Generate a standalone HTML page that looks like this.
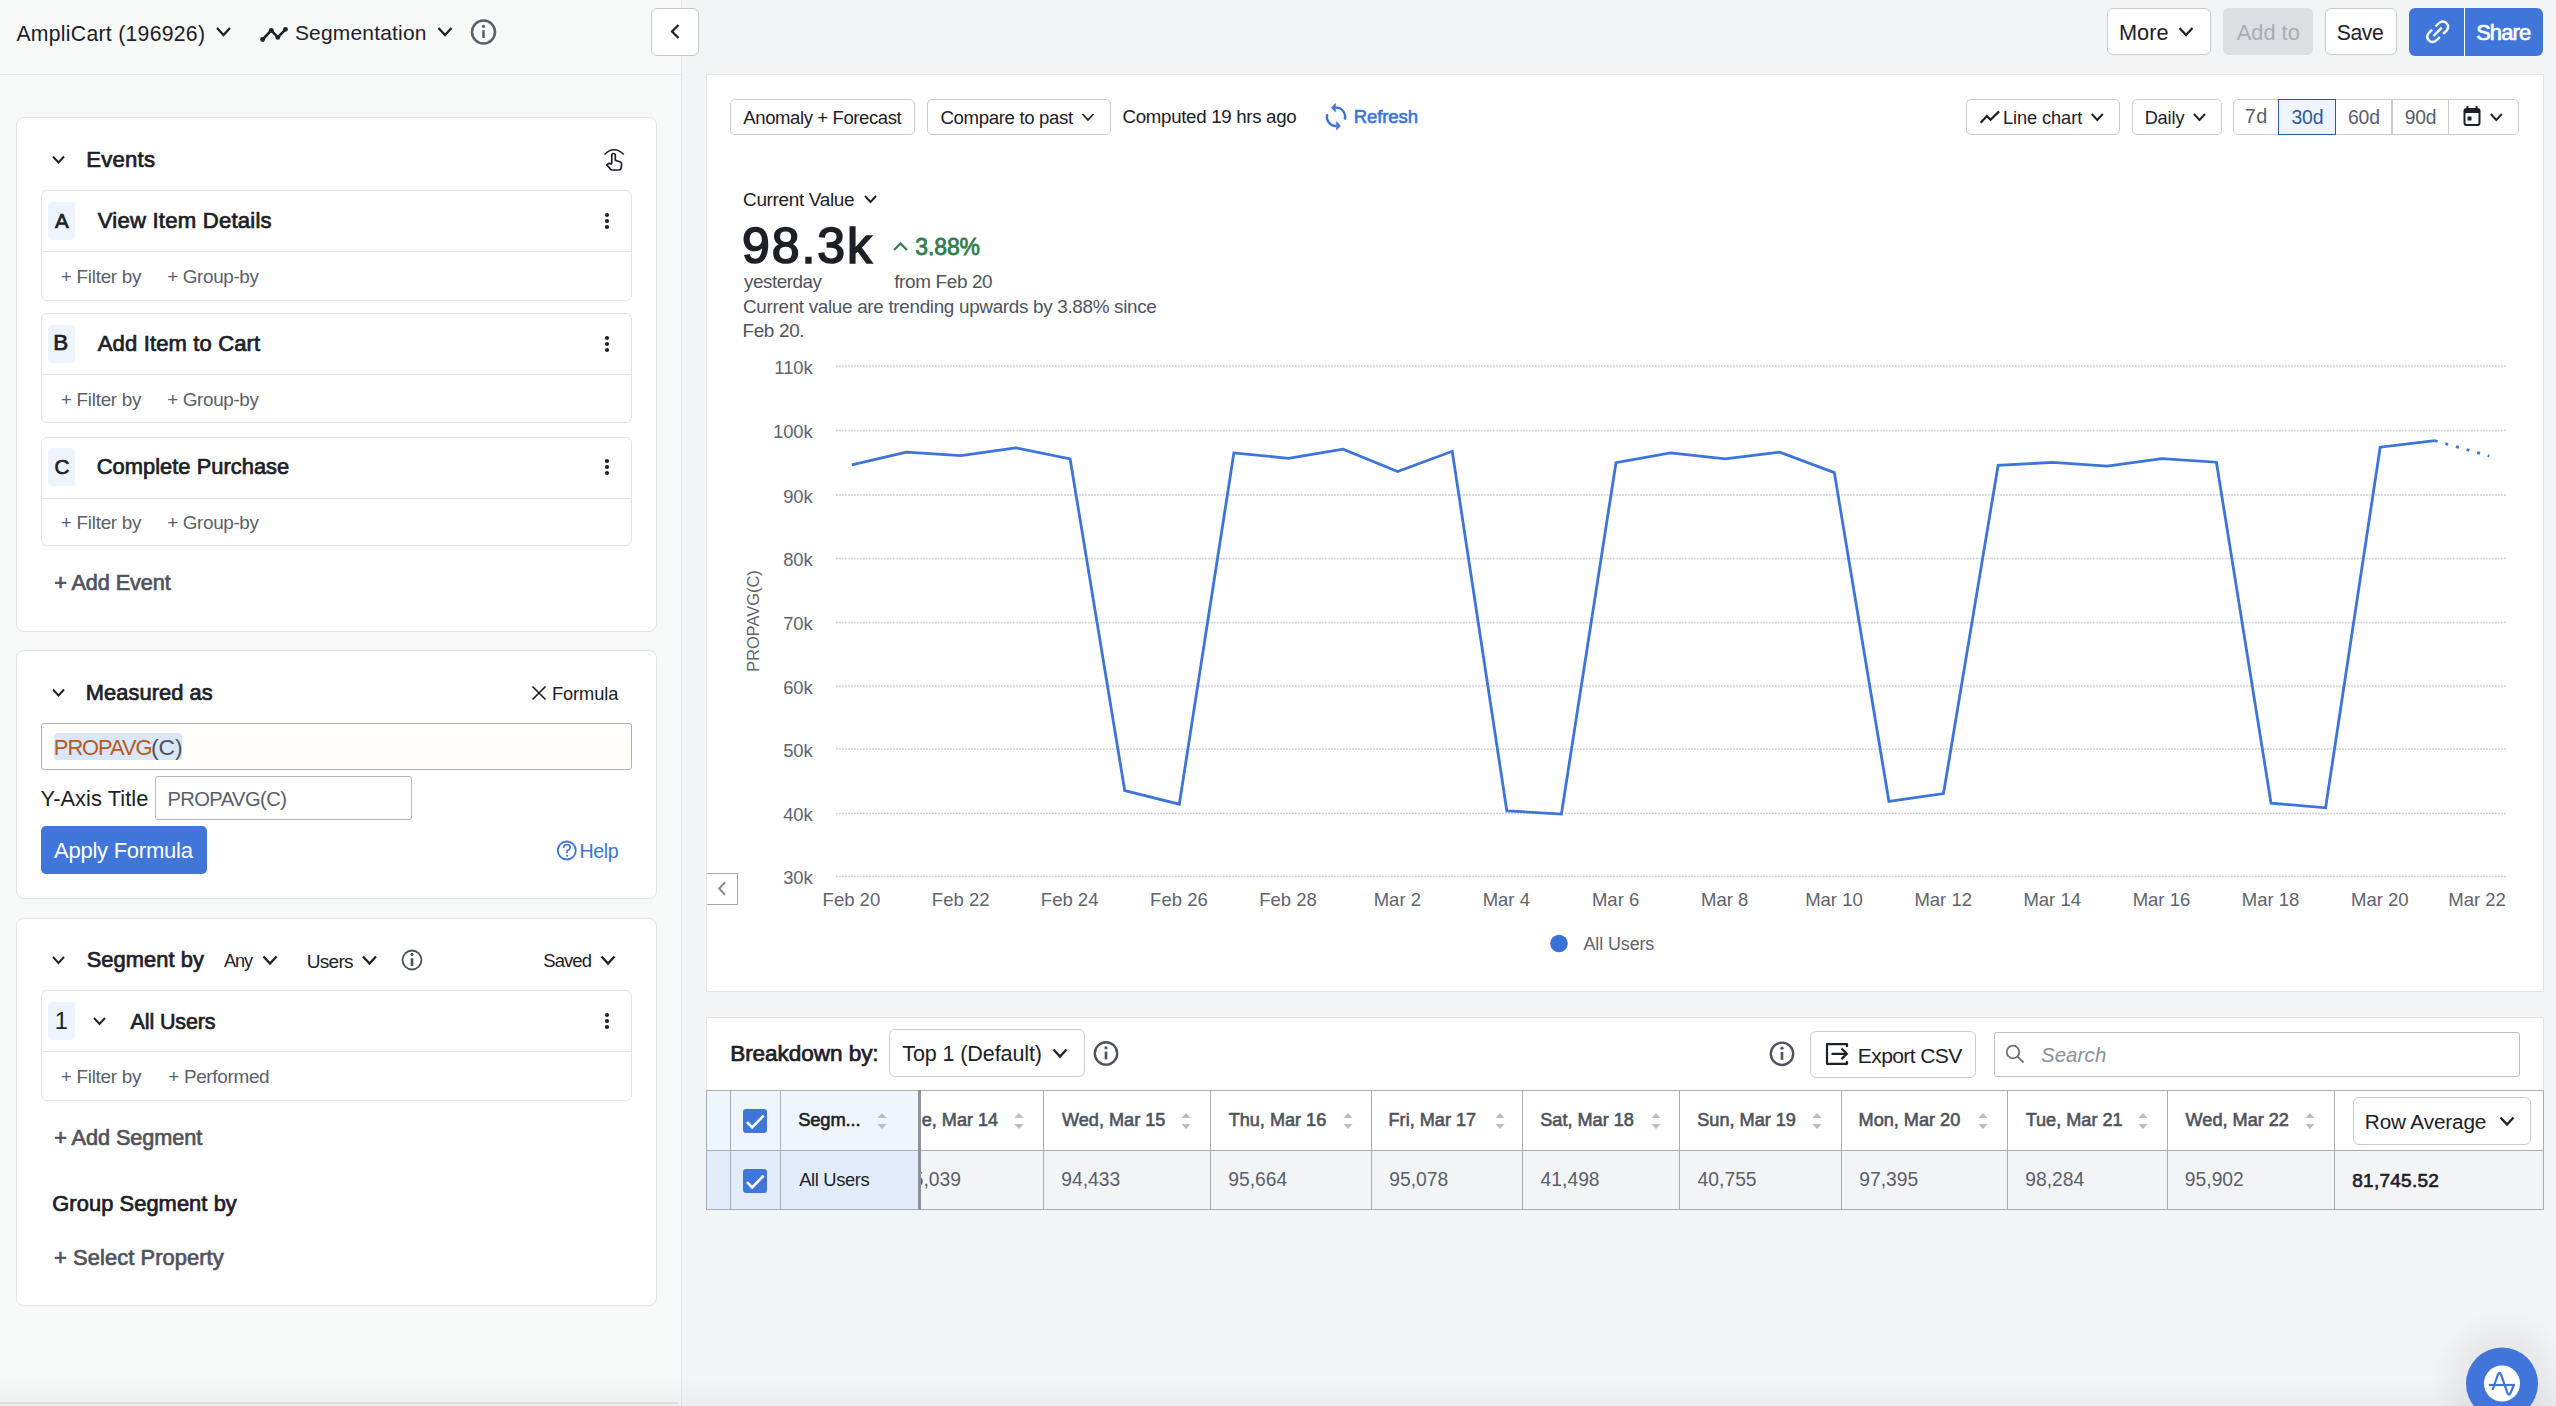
<!DOCTYPE html>
<html><head><meta charset="utf-8"><title>Segmentation</title>
<style>
html,body{margin:0;padding:0;}
body{width:2556px;height:1406px;overflow:hidden;position:relative;background:#f3f4f6;font-family:"Liberation Sans",sans-serif;}
.t{position:absolute;white-space:pre;font-family:"Liberation Sans",sans-serif;}
</style></head><body>
<div style="position:absolute;left:0px;top:0px;width:681px;height:1406px;background:#f7f8f8"></div>
<div style="position:absolute;left:681px;top:0px;width:1px;height:1406px;background:#e3e5e9"></div>
<div style="position:absolute;left:0px;top:74px;width:681px;height:1px;background:#e3e5e9"></div>
<div style="position:absolute;left:651px;top:8px;width:48px;height:48px;background:#fff;border:1.2px solid #c6c9ce;border-radius:6px;box-sizing:border-box"></div>
<div style="position:absolute;left:16px;top:117px;width:641px;height:515px;background:#fff;border:1px solid #e1e3e7;border-radius:8px;box-sizing:border-box"></div>
<div style="position:absolute;left:41px;top:190px;width:591px;height:111px;background:#fff;border:1px solid #e1e3e7;border-radius:6px;box-sizing:border-box"></div>
<div style="position:absolute;left:42px;top:251px;width:589px;height:1px;background:#e1e3e7"></div>
<div style="position:absolute;left:48px;top:202px;width:27px;height:38px;background:#eef4fd;border-radius:4px"></div>
<div style="position:absolute;left:41px;top:313px;width:591px;height:110px;background:#fff;border:1px solid #e1e3e7;border-radius:6px;box-sizing:border-box"></div>
<div style="position:absolute;left:42px;top:374px;width:589px;height:1px;background:#e1e3e7"></div>
<div style="position:absolute;left:48px;top:325px;width:27px;height:38px;background:#eef4fd;border-radius:4px"></div>
<div style="position:absolute;left:41px;top:437px;width:591px;height:109px;background:#fff;border:1px solid #e1e3e7;border-radius:6px;box-sizing:border-box"></div>
<div style="position:absolute;left:42px;top:498px;width:589px;height:1px;background:#e1e3e7"></div>
<div style="position:absolute;left:48px;top:448px;width:27px;height:38px;background:#eef4fd;border-radius:4px"></div>
<div style="position:absolute;left:16px;top:650px;width:641px;height:249px;background:#fff;border:1px solid #e1e3e7;border-radius:8px;box-sizing:border-box"></div>
<div style="position:absolute;left:41px;top:723px;width:591px;height:47px;background:#fffefb;border:1.5px solid #aeb0b8;border-radius:3px;box-sizing:border-box"></div>
<div style="position:absolute;left:54px;top:733px;width:128px;height:27px;background:#d9e7f9;border-radius:4px"></div>
<div style="position:absolute;left:155px;top:776px;width:257px;height:44px;background:#fff;border:1.5px solid #b4b6bd;border-radius:3px;box-sizing:border-box"></div>
<div style="position:absolute;left:41px;top:826px;width:166px;height:48px;background:#4176d9;border-radius:5px"></div>
<div style="position:absolute;left:16px;top:918px;width:641px;height:388px;background:#fff;border:1px solid #e1e3e7;border-radius:8px;box-sizing:border-box"></div>
<div style="position:absolute;left:41px;top:990px;width:591px;height:111px;background:#fff;border:1px solid #e1e3e7;border-radius:6px;box-sizing:border-box"></div>
<div style="position:absolute;left:42px;top:1051px;width:589px;height:1px;background:#e1e3e7"></div>
<div style="position:absolute;left:48px;top:1002px;width:27px;height:38px;background:#eef4fd;border-radius:4px"></div>
<div style="position:absolute;left:2107px;top:8px;width:104px;height:47px;background:#fff;border:1px solid #caccd1;border-radius:6px;box-sizing:border-box"></div>
<div style="position:absolute;left:2223px;top:8px;width:90px;height:47px;background:#dcdee2;border-radius:6px"></div>
<div style="position:absolute;left:2325px;top:8px;width:72px;height:47px;background:#fff;border:1px solid #caccd1;border-radius:6px;box-sizing:border-box"></div>
<div style="position:absolute;left:2409px;top:8px;width:134px;height:48px;background:#4176d9;border-radius:6px"></div>
<div style="position:absolute;left:2464px;top:8px;width:1px;height:48px;background:#fff"></div>
<div style="position:absolute;left:706px;top:74px;width:1838px;height:918px;background:#fff;border:1px solid #e1e3e7;box-sizing:border-box"></div>
<div style="position:absolute;left:730px;top:99px;width:184.5px;height:35.5px;background:#fff;border:1.5px solid #c9cbd0;border-radius:5px;box-sizing:border-box"></div>
<div style="position:absolute;left:927px;top:99px;width:183.5px;height:35.5px;background:#fff;border:1.5px solid #c9cbd0;border-radius:5px;box-sizing:border-box"></div>
<div style="position:absolute;left:1966px;top:99px;width:153.5px;height:35.5px;background:#fff;border:1.5px solid #c9cbd0;border-radius:5px;box-sizing:border-box"></div>
<div style="position:absolute;left:2132px;top:99px;width:89.5px;height:35.5px;background:#fff;border:1.5px solid #c9cbd0;border-radius:5px;box-sizing:border-box"></div>
<div style="position:absolute;left:2233px;top:99px;width:286px;height:35.5px;background:#fff;border:1.5px solid #c9cbd0;border-radius:5px;box-sizing:border-box"></div>
<div style="position:absolute;left:2334.95px;top:99.5px;width:1.5px;height:34.5px;background:#c9cbd0"></div>
<div style="position:absolute;left:2391.25px;top:99.5px;width:1.5px;height:34.5px;background:#c9cbd0"></div>
<div style="position:absolute;left:2447.55px;top:99.5px;width:1.5px;height:34.5px;background:#c9cbd0"></div>
<div style="position:absolute;left:2278px;top:99px;width:58px;height:35.5px;background:#eef5fe;border:1.5px solid #2f57a8;box-sizing:border-box"></div>
<div style="position:absolute;left:706.5px;top:873px;width:31.5px;height:31.5px;background:#fff;border:1px solid #a4a7b0;border-left:none;box-sizing:border-box"></div>
<div style="position:absolute;left:706px;top:1017px;width:1838px;height:193px;background:#fff;border:1px solid #e1e3e7;box-sizing:border-box"></div>
<div style="position:absolute;left:889px;top:1029px;width:196px;height:48px;background:#fff;border:1px solid #c9cbd0;border-radius:6px;box-sizing:border-box"></div>
<div style="position:absolute;left:1809.5px;top:1030.5px;width:166.5px;height:47px;background:#fff;border:1px solid #c9cbd0;border-radius:6px;box-sizing:border-box"></div>
<div style="position:absolute;left:1994px;top:1031.5px;width:525.5px;height:45px;background:#fff;border:1px solid #b9bdc4;border-radius:3px;box-sizing:border-box"></div>
<div style="position:absolute;left:706px;top:1090px;width:1838px;height:60px;background:#fff"></div>
<div style="position:absolute;left:706px;top:1150px;width:1838px;height:60px;background:#f3f4f6"></div>
<div style="position:absolute;left:706px;top:1090px;width:213px;height:60px;background:#eef5fd"></div>
<div style="position:absolute;left:706px;top:1150px;width:213px;height:60px;background:#e2ebf9"></div>
<div style="position:absolute;left:706px;top:1090px;width:1838px;height:1px;background:#a8acb3"></div>
<div style="position:absolute;left:706px;top:1150px;width:1838px;height:1px;background:#a8acb3"></div>
<div style="position:absolute;left:706px;top:1209px;width:1838px;height:1px;background:#a8acb3"></div>
<div style="position:absolute;left:706px;top:1090px;width:1px;height:120px;background:#a8acb3"></div>
<div style="position:absolute;left:2542.5px;top:1090px;width:1px;height:120px;background:#a8acb3"></div>
<div style="position:absolute;left:729.9px;top:1090px;width:1px;height:120px;background:#a8acb3"></div>
<div style="position:absolute;left:779.9px;top:1090px;width:1px;height:120px;background:#a8acb3"></div>
<div style="position:absolute;left:1042.7px;top:1090px;width:1px;height:120px;background:#a8acb3"></div>
<div style="position:absolute;left:1209.8px;top:1090px;width:1px;height:120px;background:#a8acb3"></div>
<div style="position:absolute;left:1370.5px;top:1090px;width:1px;height:120px;background:#a8acb3"></div>
<div style="position:absolute;left:1521.6px;top:1090px;width:1px;height:120px;background:#a8acb3"></div>
<div style="position:absolute;left:1679.0px;top:1090px;width:1px;height:120px;background:#a8acb3"></div>
<div style="position:absolute;left:1840.9px;top:1090px;width:1px;height:120px;background:#a8acb3"></div>
<div style="position:absolute;left:2006.9px;top:1090px;width:1px;height:120px;background:#a8acb3"></div>
<div style="position:absolute;left:2167.0px;top:1090px;width:1px;height:120px;background:#a8acb3"></div>
<div style="position:absolute;left:2333.9px;top:1090px;width:1px;height:120px;background:#a8acb3"></div>
<div style="position:absolute;left:918px;top:1090px;width:3px;height:120px;background:#8e929a"></div>
<div style="position:absolute;left:2353px;top:1097px;width:178px;height:48px;background:#fff;border:1px solid #c9cbd0;border-radius:6px;box-sizing:border-box"></div>
<div style="position:absolute;left:743px;top:1109px;width:24px;height:24px;background:#4176d9;border-radius:3px"></div>
<div style="position:absolute;left:743px;top:1169px;width:24px;height:24px;background:#4176d9;border-radius:3px"></div>
<div style="position:absolute;left:0px;top:1378px;width:2556px;height:28px;background:linear-gradient(to bottom,rgba(0,0,0,0),rgba(0,0,0,0.03))"></div>
<div style="position:absolute;left:0px;top:1402px;width:679px;height:1.5px;background:#dcdee2"></div>
<div style="position:absolute;left:2430px;top:1310px;width:144px;height:144px;border-radius:50%;background:radial-gradient(circle,rgba(0,0,0,0.10) 0%,rgba(0,0,0,0.05) 35%,rgba(0,0,0,0) 70%)"></div>
<svg width="2556" height="1406" style="position:absolute;left:0;top:0">
<polyline points="217.0,28.0 223.5,35.0 230.0,28.0" fill="none" stroke="#1d2026" stroke-width="2.3"/>
<polyline points="262.6,39.5 271.3,30.3 277.8,37.4 285.5,29.3" fill="none" stroke="#1d2026" stroke-width="2.6" stroke-linejoin="round"/>
<circle cx="262.6" cy="39.5" r="2.4" fill="#1d2026"/>
<circle cx="271.3" cy="30.3" r="2.4" fill="#1d2026"/>
<circle cx="277.8" cy="37.4" r="2.4" fill="#1d2026"/>
<circle cx="285.5" cy="29.3" r="2.4" fill="#1d2026"/>
<polyline points="438.5,28.0 445,35.0 451.5,28.0" fill="none" stroke="#1d2026" stroke-width="2.3"/>
<circle cx="483.5" cy="32" r="11.5" fill="none" stroke="#5a5f69" stroke-width="2.5"/>
<line x1="483.5" y1="30.2" x2="483.5" y2="38" stroke="#5a5f69" stroke-width="2.6"/>
<circle cx="483.5" cy="26.4" r="1.6" fill="#5a5f69"/>
<polyline points="678.5,25 672,31.5 678.5,38" fill="none" stroke="#1d2026" stroke-width="2.2"/>
<polyline points="53.0,156.5 58.5,162.5 64.0,156.5" fill="none" stroke="#1d2026" stroke-width="1.9"/>
<polyline points="53.0,689.5 58.5,695.5 64.0,689.5" fill="none" stroke="#1d2026" stroke-width="1.9"/>
<polyline points="53.0,957.0 58.5,963.0 64.0,957.0" fill="none" stroke="#1d2026" stroke-width="1.9"/>
<polyline points="94.0,1018.0 99.5,1024.0 105.0,1018.0" fill="none" stroke="#1d2026" stroke-width="1.9"/>
<path d="M604.5,154.5 Q614,145 623.8,154.5" fill="none" stroke="#1d2026" stroke-width="1.6"/>
<path d="M611.8,163.5 L611.8,154.5 Q613.5,152.5 615.3,154.5 L615.3,160.2 L620.5,162 Q622,163 621.6,165 L621,168.6 Q620.6,170 619,170 L612.3,170 Q611.5,170 610.8,169.3 L606.8,165 L608.5,163.6 Q610,163 611.8,164.5" fill="none" stroke="#1d2026" stroke-width="1.7" stroke-linejoin="round"/>
<circle cx="607" cy="215" r="2.1" fill="#1d2026"/>
<circle cx="607" cy="221" r="2.1" fill="#1d2026"/>
<circle cx="607" cy="227" r="2.1" fill="#1d2026"/>
<circle cx="607" cy="338" r="2.1" fill="#1d2026"/>
<circle cx="607" cy="344" r="2.1" fill="#1d2026"/>
<circle cx="607" cy="350" r="2.1" fill="#1d2026"/>
<circle cx="607" cy="461" r="2.1" fill="#1d2026"/>
<circle cx="607" cy="467" r="2.1" fill="#1d2026"/>
<circle cx="607" cy="473" r="2.1" fill="#1d2026"/>
<circle cx="607" cy="1015" r="2.1" fill="#1d2026"/>
<circle cx="607" cy="1021" r="2.1" fill="#1d2026"/>
<circle cx="607" cy="1027" r="2.1" fill="#1d2026"/>
<path d="M532.5,686.5 L545.5,699.5 M545.5,686.5 L532.5,699.5" stroke="#1d2026" stroke-width="1.7"/>
<circle cx="566.8" cy="850.5" r="9" fill="none" stroke="#3b73d9" stroke-width="1.8"/>
<path d="M563.6,848 Q563.8,844.5 567,844.5 Q570.3,844.6 570.2,847.6 Q570,849.6 567.2,850.8 L567.2,853" fill="none" stroke="#3b73d9" stroke-width="1.7"/>
<circle cx="567.2" cy="855.8" r="1.1" fill="#3b73d9"/>
<polyline points="263.5,956.5 270,963.5 276.5,956.5" fill="none" stroke="#1d2026" stroke-width="2.3"/>
<polyline points="363.0,956.5 369.5,963.5 376.0,956.5" fill="none" stroke="#1d2026" stroke-width="2.3"/>
<circle cx="412" cy="960" r="9.5" fill="none" stroke="#4f535c" stroke-width="1.8"/>
<line x1="412" y1="958.2" x2="412" y2="966" stroke="#4f535c" stroke-width="2.6"/>
<circle cx="412" cy="954.4" r="1.6" fill="#4f535c"/>
<polyline points="601.5,956.5 608,963.5 614.5,956.5" fill="none" stroke="#1d2026" stroke-width="2.3"/>
<polyline points="2179.5,28.0 2186,35.0 2192.5,28.0" fill="none" stroke="#1d2026" stroke-width="2.3"/>
<g fill="none" stroke="#fff" stroke-width="2.4" stroke-linecap="butt"><path d="M2435.5,26.5 L2439,23.2 Q2443,19.8 2446.5,23.2 Q2449.8,26.8 2446.5,30.6 L2443.2,33.8"/><path d="M2439.8,37 L2436.3,40.3 Q2432.3,43.8 2428.8,40.3 Q2425.5,36.7 2428.8,33 L2432.2,29.7"/><path d="M2433.5,36 L2441.8,27.6"/></g>
<polyline points="1082.5,114.0 1088,120.0 1093.5,114.0" fill="none" stroke="#1d2026" stroke-width="1.8"/>
<g fill="none" stroke="#3b73d9" stroke-width="2.4"><path d="M1336,107.6 A9,9 0 0 1 1344.6,119.5"/><path d="M1336,126 A9,9 0 0 1 1327.4,114.2"/></g>
<path d="M1331,107.7 L1335.8,103 L1335.8,112.6 Z" fill="#3b73d9"/><path d="M1340.8,126 L1336.2,121 L1336.2,130.6 Z" fill="#3b73d9"/>
<polyline points="1980.6,122.7 1986.9,116.1 1990.6,119.8 1999.1,111.4" fill="none" stroke="#1d2026" stroke-width="2.2"/>
<polyline points="2091.8,114.0 2097.3,120.0 2102.8,114.0" fill="none" stroke="#1d2026" stroke-width="1.9"/>
<polyline points="2194.0,114.0 2199.5,120.0 2205.0,114.0" fill="none" stroke="#1d2026" stroke-width="1.9"/>
<rect x="2464.5" y="109" width="15" height="16" rx="2" fill="none" stroke="#1d2026" stroke-width="2"/>
<rect x="2464.5" y="109" width="15" height="4" fill="#1d2026"/>
<rect x="2467.5" y="116.5" width="4" height="4" fill="#1d2026"/>
<path d="M2467.5,106 v4 M2476.5,106 v4" stroke="#1d2026" stroke-width="2"/>
<polyline points="2490.8,114.0 2496.3,120.0 2501.8,114.0" fill="none" stroke="#1d2026" stroke-width="1.9"/>
<polyline points="894,250 900.5,243.5 907,250" fill="none" stroke="#2e7d4e" stroke-width="2.2"/>
<polyline points="865.0,196.0 870.5,202.0 876.0,196.0" fill="none" stroke="#1d2026" stroke-width="1.9"/>
<line x1="836" y1="366.00" x2="2506" y2="366.00" stroke="#c9cfd7" stroke-width="1.5" stroke-dasharray="1.8 1.2"/>
<line x1="836" y1="430.50" x2="2506" y2="430.50" stroke="#c9cfd7" stroke-width="1.5" stroke-dasharray="1.8 1.2"/>
<line x1="836" y1="495.00" x2="2506" y2="495.00" stroke="#c9cfd7" stroke-width="1.5" stroke-dasharray="1.8 1.2"/>
<line x1="836" y1="558.50" x2="2506" y2="558.50" stroke="#c9cfd7" stroke-width="1.5" stroke-dasharray="1.8 1.2"/>
<line x1="836" y1="622.50" x2="2506" y2="622.50" stroke="#c9cfd7" stroke-width="1.5" stroke-dasharray="1.8 1.2"/>
<line x1="836" y1="686.00" x2="2506" y2="686.00" stroke="#c9cfd7" stroke-width="1.5" stroke-dasharray="1.8 1.2"/>
<line x1="836" y1="749.00" x2="2506" y2="749.00" stroke="#c9cfd7" stroke-width="1.5" stroke-dasharray="1.8 1.2"/>
<line x1="836" y1="813.50" x2="2506" y2="813.50" stroke="#c9cfd7" stroke-width="1.5" stroke-dasharray="1.8 1.2"/>
<line x1="836" y1="876.50" x2="2506" y2="876.50" stroke="#c9cfd7" stroke-width="1.5" stroke-dasharray="1.8 1.2"/>
<polyline points="851.80,464.90 906.38,452.20 960.97,455.70 1015.55,447.80 1070.14,459.00 1124.72,790.50 1179.31,804.20 1233.89,452.90 1288.48,458.30 1343.07,449.10 1397.65,471.50 1452.24,451.30 1506.82,810.80 1561.40,814.10 1615.99,462.70 1670.57,452.90 1725.16,458.80 1779.74,452.20 1834.33,472.60 1888.91,801.50 1943.50,793.60 1998.09,465.40 2052.67,462.30 2107.26,466.20 2161.84,458.60 2216.43,462.20 2271.01,803.10 2325.60,807.80 2380.18,447.20 2434.76,440.70" fill="none" stroke="#3d74da" stroke-width="2.8" stroke-linejoin="miter" stroke-miterlimit="10"/>
<line x1="2434.76" y1="440.7" x2="2489.35" y2="456.0" stroke="#3d74da" stroke-width="2.8" stroke-dasharray="3 8"/>
<text x="0" y="0" transform="translate(758.5,621) rotate(-90)" text-anchor="middle" font-family="Liberation Sans" font-size="16.4" fill="#5f636b">PROPAVG(C)</text>
<polyline points="725,882.3 719.2,888.5 725,894.7" fill="none" stroke="#878b96" stroke-width="2"/>
<circle cx="1559" cy="943.5" r="8.8" fill="#3b72d9"/>
<polyline points="1053.5,1049.5 1060,1056.5 1066.5,1049.5" fill="none" stroke="#1d2026" stroke-width="2.3"/>
<circle cx="1106" cy="1053.4" r="11.2" fill="none" stroke="#4f535c" stroke-width="2.4"/>
<line x1="1106" y1="1051.6000000000001" x2="1106" y2="1059.4" stroke="#4f535c" stroke-width="2.6"/>
<circle cx="1106" cy="1047.8000000000002" r="1.6" fill="#4f535c"/>
<circle cx="1782" cy="1053.8" r="11.2" fill="none" stroke="#4f535c" stroke-width="2.4"/>
<line x1="1782" y1="1052.0" x2="1782" y2="1059.8" stroke="#4f535c" stroke-width="2.6"/>
<circle cx="1782" cy="1048.2" r="1.6" fill="#4f535c"/>
<path d="M1847,1047 L1847,1044.2 L1827,1044.2 L1827,1063.8 L1847,1063.8 L1847,1061" fill="none" stroke="#1d2026" stroke-width="2.2" stroke-linejoin="round"/>
<path d="M1831.5,1053.8 L1846.5,1053.8 M1841.5,1048.5 L1846.8,1053.8 L1841.5,1059.1" fill="none" stroke="#1d2026" stroke-width="2.2"/>
<circle cx="2013" cy="1052" r="6.3" fill="none" stroke="#6b7079" stroke-width="1.8"/><line x1="2017.6" y1="1056.6" x2="2023.5" y2="1062.5" stroke="#6b7079" stroke-width="1.8"/>
<polyline points="747,1122.2 752.2,1127.4 763.6,1115.6" fill="none" stroke="#fff" stroke-width="2.6"/>
<polyline points="747,1182.2 752.2,1187.4 763.6,1175.6" fill="none" stroke="#fff" stroke-width="2.6"/>
<path d="M877.3,1118 L882,1113 L886.7,1118 Z M877.3,1124 L882,1129 L886.7,1124 Z" fill="#b9bdc4"/>
<path d="M1014.3,1118 L1019,1113 L1023.7,1118 Z M1014.3,1124 L1019,1129 L1023.7,1124 Z" fill="#b9bdc4"/>
<path d="M1181.3,1118 L1186,1113 L1190.7,1118 Z M1181.3,1124 L1186,1129 L1190.7,1124 Z" fill="#b9bdc4"/>
<path d="M1343.3,1118 L1348,1113 L1352.7,1118 Z M1343.3,1124 L1348,1129 L1352.7,1124 Z" fill="#b9bdc4"/>
<path d="M1495.3,1118 L1500,1113 L1504.7,1118 Z M1495.3,1124 L1500,1129 L1504.7,1124 Z" fill="#b9bdc4"/>
<path d="M1651.3,1118 L1656,1113 L1660.7,1118 Z M1651.3,1124 L1656,1129 L1660.7,1124 Z" fill="#b9bdc4"/>
<path d="M1812.3,1118 L1817,1113 L1821.7,1118 Z M1812.3,1124 L1817,1129 L1821.7,1124 Z" fill="#b9bdc4"/>
<path d="M1978.3,1118 L1983,1113 L1987.7,1118 Z M1978.3,1124 L1983,1129 L1987.7,1124 Z" fill="#b9bdc4"/>
<path d="M2138.3,1118 L2143,1113 L2147.7,1118 Z M2138.3,1124 L2143,1129 L2147.7,1124 Z" fill="#b9bdc4"/>
<path d="M2305.3,1118 L2310,1113 L2314.7,1118 Z M2305.3,1124 L2310,1129 L2314.7,1124 Z" fill="#b9bdc4"/>
<polyline points="2500.5,1117.5 2507,1124.5 2513.5,1117.5" fill="none" stroke="#1d2026" stroke-width="2.3"/>
<circle cx="2502" cy="1383.5" r="36" fill="#4175d9"/>
<circle cx="2502" cy="1383.5" r="18" fill="#fff"/>
<g fill="none" stroke="#4175d9" stroke-width="2.2"><path d="M2489,1385 L2515,1385"/><path d="M2492.5,1390 L2498,1374.5 Q2499.5,1371 2501,1374.5 L2507.5,1393 Q2509,1396.5 2510.5,1393 L2513.5,1386"/></g>
</svg>
<span class="t" style="left:16.40px;top:22.88px;font-size:21.17px;line-height:21.17px;color:#1d2026;letter-spacing:0.302px">AmpliCart (196926)</span>
<span class="t" style="left:294.96px;top:22.57px;font-size:20.95px;line-height:20.95px;color:#1d2026;letter-spacing:0.204px">Segmentation</span>
<span class="t" style="left:86.23px;top:149.06px;font-size:22.13px;line-height:22.13px;color:#1d2026;-webkit-text-stroke:0.73px #1d2026;letter-spacing:0.233px">Events</span>
<span class="t" style="left:55.00px;top:211.39px;font-size:20.57px;line-height:20.57px;color:#1d2026;-webkit-text-stroke:0.68px #1d2026;letter-spacing:-0.783px">A</span>
<span class="t" style="left:97.80px;top:210.05px;font-size:22.15px;line-height:22.15px;color:#1d2026;-webkit-text-stroke:0.73px #1d2026;letter-spacing:0.197px">View Item Details</span>
<span class="t" style="left:60.84px;top:268.28px;font-size:18.92px;line-height:18.92px;color:#5a5f69;letter-spacing:-0.283px">+ Filter by</span>
<span class="t" style="left:167.24px;top:268.30px;font-size:18.90px;line-height:18.90px;color:#5a5f69;letter-spacing:-0.369px">+ Group-by</span>
<span class="t" style="left:53.20px;top:332.49px;font-size:22.45px;line-height:22.45px;color:#1d2026;-webkit-text-stroke:0.74px #1d2026;letter-spacing:0.375px">B</span>
<span class="t" style="left:97.80px;top:332.86px;font-size:22.02px;line-height:22.02px;color:#1d2026;-webkit-text-stroke:0.73px #1d2026;letter-spacing:0.136px">Add Item to Cart</span>
<span class="t" style="left:60.84px;top:390.78px;font-size:18.92px;line-height:18.92px;color:#5a5f69;letter-spacing:-0.283px">+ Filter by</span>
<span class="t" style="left:167.24px;top:390.80px;font-size:18.90px;line-height:18.90px;color:#5a5f69;letter-spacing:-0.369px">+ Group-by</span>
<span class="t" style="left:54.47px;top:457.33px;font-size:20.64px;line-height:20.64px;color:#1d2026;-webkit-text-stroke:0.68px #1d2026;letter-spacing:-0.707px">C</span>
<span class="t" style="left:96.71px;top:456.32px;font-size:21.83px;line-height:21.83px;color:#1d2026;-webkit-text-stroke:0.72px #1d2026;letter-spacing:0.049px">Complete Purchase</span>
<span class="t" style="left:60.84px;top:513.78px;font-size:18.92px;line-height:18.92px;color:#5a5f69;letter-spacing:-0.283px">+ Filter by</span>
<span class="t" style="left:167.24px;top:513.80px;font-size:18.90px;line-height:18.90px;color:#5a5f69;letter-spacing:-0.369px">+ Group-by</span>
<span class="t" style="left:54.13px;top:572.49px;font-size:21.63px;line-height:21.63px;color:#4f535c;-webkit-text-stroke:0.71px #4f535c;letter-spacing:-0.061px">+ Add Event</span>
<span class="t" style="left:85.85px;top:682.31px;font-size:21.84px;line-height:21.84px;color:#1d2026;-webkit-text-stroke:0.72px #1d2026;letter-spacing:0.056px">Measured as</span>
<span class="t" style="left:551.94px;top:685.15px;font-size:18.25px;line-height:18.25px;color:#1d2026;letter-spacing:-0.092px">Formula</span>
<span class="t" style="left:53.85px;top:737.30px;font-size:21.85px;line-height:21.85px;color:#b45a22;letter-spacing:-1.035px">PROPAVG</span>
<span class="t" style="left:151.12px;top:736.36px;font-size:22.97px;line-height:22.97px;color:#4f535c;letter-spacing:-0.142px">(C)</span>
<span class="t" style="left:40.56px;top:788.00px;font-size:21.85px;line-height:21.85px;color:#1d2026;letter-spacing:0.050px">Y-Axis Title</span>
<span class="t" style="left:167.39px;top:789.42px;font-size:20.17px;line-height:20.17px;color:#5a5f69;letter-spacing:-0.566px">PROPAVG(C)</span>
<span class="t" style="left:54.00px;top:839.87px;font-size:22.01px;line-height:22.01px;color:#ffffff;letter-spacing:-0.246px">Apply Formula</span>
<span class="t" style="left:579.43px;top:841.84px;font-size:19.68px;line-height:19.68px;color:#3b73d9;letter-spacing:-0.395px">Help</span>
<span class="t" style="left:86.73px;top:949.30px;font-size:21.86px;line-height:21.86px;color:#1d2026;-webkit-text-stroke:0.72px #1d2026;letter-spacing:0.070px">Segment by</span>
<span class="t" style="left:224.00px;top:952.41px;font-size:18.18px;line-height:18.18px;color:#1d2026;letter-spacing:-1.160px">Any</span>
<span class="t" style="left:306.66px;top:951.63px;font-size:19.10px;line-height:19.10px;color:#1d2026;letter-spacing:-0.744px">Users</span>
<span class="t" style="left:543.26px;top:952.11px;font-size:18.53px;line-height:18.53px;color:#1d2026;letter-spacing:-0.940px">Saved</span>
<span class="t" style="left:54.65px;top:1009.83px;font-size:23.59px;line-height:23.59px;color:#1d2026;letter-spacing:0.321px">1</span>
<span class="t" style="left:130.50px;top:1011.59px;font-size:21.51px;line-height:21.51px;color:#1d2026;-webkit-text-stroke:0.71px #1d2026;letter-spacing:-0.113px">All Users</span>
<span class="t" style="left:60.74px;top:1067.78px;font-size:18.92px;line-height:18.92px;color:#5a5f69;letter-spacing:-0.283px">+ Filter by</span>
<span class="t" style="left:168.24px;top:1067.76px;font-size:18.95px;line-height:18.95px;color:#5a5f69;letter-spacing:-0.336px">+ Performed</span>
<span class="t" style="left:54.13px;top:1126.86px;font-size:21.66px;line-height:21.66px;color:#4f535c;-webkit-text-stroke:0.71px #4f535c;letter-spacing:-0.043px">+ Add Segment</span>
<span class="t" style="left:52.31px;top:1193.10px;font-size:21.86px;line-height:21.86px;color:#1d2026;-webkit-text-stroke:0.72px #1d2026;letter-spacing:0.067px">Group Segment by</span>
<span class="t" style="left:54.12px;top:1247.27px;font-size:21.89px;line-height:21.89px;color:#4f535c;-webkit-text-stroke:0.72px #4f535c;letter-spacing:0.072px">+ Select Property</span>
<span class="t" style="left:2118.96px;top:22.00px;font-size:21.74px;line-height:21.74px;color:#1d2026">More</span>
<span class="t" style="left:2236.80px;top:21.98px;font-size:21.76px;line-height:21.76px;color:#a9acb2;letter-spacing:0.014px">Add to</span>
<span class="t" style="left:2336.75px;top:22.48px;font-size:21.17px;line-height:21.17px;color:#1d2026;letter-spacing:-0.416px">Save</span>
<span class="t" style="left:2476.13px;top:21.54px;font-size:21.80px;line-height:21.80px;color:#ffffff;-webkit-text-stroke:0.72px #ffffff;letter-spacing:-0.804px">Share</span>
<span class="t" style="left:743.30px;top:108.62px;font-size:18.52px;line-height:18.52px;color:#1d2026;letter-spacing:-0.397px">Anomaly + Forecast</span>
<span class="t" style="left:940.47px;top:109.05px;font-size:18.61px;line-height:18.61px;color:#1d2026;letter-spacing:-0.349px">Compare to past</span>
<span class="t" style="left:1122.57px;top:108.48px;font-size:18.69px;line-height:18.69px;color:#1d2026;letter-spacing:-0.312px">Computed 19 hrs ago</span>
<span class="t" style="left:1353.82px;top:108.03px;font-size:18.51px;line-height:18.51px;color:#3b73d9;-webkit-text-stroke:0.61px #3b73d9;letter-spacing:-0.101px">Refresh</span>
<span class="t" style="left:2002.94px;top:109.07px;font-size:18.23px;line-height:18.23px;color:#1d2026;letter-spacing:-0.083px">Line chart</span>
<span class="t" style="left:2144.65px;top:109.12px;font-size:18.16px;line-height:18.16px;color:#1d2026;letter-spacing:-0.130px">Daily</span>
<span class="t" style="left:2244.81px;top:107.18px;font-size:19.87px;line-height:19.87px;color:#5a5f69;letter-spacing:0.307px">7d</span>
<span class="t" style="left:2291.42px;top:107.56px;font-size:19.42px;line-height:19.42px;color:#2f57a8;letter-spacing:-0.115px">30d</span>
<span class="t" style="left:2347.93px;top:107.56px;font-size:19.42px;line-height:19.42px;color:#5a5f69;letter-spacing:-0.117px">60d</span>
<span class="t" style="left:2404.73px;top:107.67px;font-size:19.29px;line-height:19.29px;color:#5a5f69;letter-spacing:-0.216px">90d</span>
<span class="t" style="left:743.05px;top:190.77px;font-size:18.93px;line-height:18.93px;color:#1d2026;letter-spacing:-0.316px">Current Value</span>
<span class="t" style="left:742.00px;top:221.48px;font-size:50.00px;line-height:50.00px;color:#1d2026;-webkit-text-stroke:1.65px #1d2026;letter-spacing:1.946px">98.3k</span>
<span class="t" style="left:915.31px;top:235.72px;font-size:23.01px;line-height:23.01px;color:#2e7d4e;-webkit-text-stroke:0.76px #2e7d4e;letter-spacing:-0.122px">3.88%</span>
<span class="t" style="left:744.00px;top:272.70px;font-size:18.78px;line-height:18.78px;color:#4f535c;letter-spacing:-0.427px">yesterday</span>
<span class="t" style="left:894.21px;top:272.59px;font-size:18.91px;line-height:18.91px;color:#4f535c;letter-spacing:-0.349px">from Feb 20</span>
<span class="t" style="left:743.06px;top:298.21px;font-size:18.89px;line-height:18.89px;color:#4f535c;letter-spacing:-0.319px">Current value are trending upwards by 3.88% since</span>
<span class="t" style="left:742.49px;top:322.31px;font-size:18.89px;line-height:18.89px;color:#4f535c;letter-spacing:-0.319px">Feb 20.</span>
<span class="t" style="left:774.28px;top:358.82px;font-size:18.40px;line-height:18.40px;color:#5f636b">110k</span>
<span class="t" style="left:772.92px;top:423.32px;font-size:18.40px;line-height:18.40px;color:#5f636b">100k</span>
<span class="t" style="left:783.15px;top:487.82px;font-size:18.40px;line-height:18.40px;color:#5f636b">90k</span>
<span class="t" style="left:783.15px;top:551.32px;font-size:18.40px;line-height:18.40px;color:#5f636b">80k</span>
<span class="t" style="left:783.15px;top:615.32px;font-size:18.40px;line-height:18.40px;color:#5f636b">70k</span>
<span class="t" style="left:783.15px;top:678.82px;font-size:18.40px;line-height:18.40px;color:#5f636b">60k</span>
<span class="t" style="left:783.15px;top:741.82px;font-size:18.40px;line-height:18.40px;color:#5f636b">50k</span>
<span class="t" style="left:783.15px;top:806.32px;font-size:18.40px;line-height:18.40px;color:#5f636b">40k</span>
<span class="t" style="left:783.15px;top:869.32px;font-size:18.40px;line-height:18.40px;color:#5f636b">30k</span>
<span class="t" style="left:822.60px;top:891.44px;font-size:18.50px;line-height:18.50px;color:#5f636b">Feb 20</span>
<span class="t" style="left:931.86px;top:891.44px;font-size:18.50px;line-height:18.50px;color:#5f636b">Feb 22</span>
<span class="t" style="left:1040.84px;top:891.44px;font-size:18.50px;line-height:18.50px;color:#5f636b">Feb 24</span>
<span class="t" style="left:1150.11px;top:891.44px;font-size:18.50px;line-height:18.50px;color:#5f636b">Feb 26</span>
<span class="t" style="left:1259.28px;top:891.44px;font-size:18.50px;line-height:18.50px;color:#5f636b">Feb 28</span>
<span class="t" style="left:1373.69px;top:891.44px;font-size:18.50px;line-height:18.50px;color:#5f636b">Mar 2</span>
<span class="t" style="left:1482.68px;top:891.44px;font-size:18.50px;line-height:18.50px;color:#5f636b">Mar 4</span>
<span class="t" style="left:1591.94px;top:891.44px;font-size:18.50px;line-height:18.50px;color:#5f636b">Mar 6</span>
<span class="t" style="left:1701.11px;top:891.44px;font-size:18.50px;line-height:18.50px;color:#5f636b">Mar 8</span>
<span class="t" style="left:1805.14px;top:891.44px;font-size:18.50px;line-height:18.50px;color:#5f636b">Mar 10</span>
<span class="t" style="left:1914.40px;top:891.44px;font-size:18.50px;line-height:18.50px;color:#5f636b">Mar 12</span>
<span class="t" style="left:2023.38px;top:891.44px;font-size:18.50px;line-height:18.50px;color:#5f636b">Mar 14</span>
<span class="t" style="left:2132.65px;top:891.44px;font-size:18.50px;line-height:18.50px;color:#5f636b">Mar 16</span>
<span class="t" style="left:2241.82px;top:891.44px;font-size:18.50px;line-height:18.50px;color:#5f636b">Mar 18</span>
<span class="t" style="left:2350.99px;top:891.44px;font-size:18.50px;line-height:18.50px;color:#5f636b">Mar 20</span>
<span class="t" style="left:2448.28px;top:891.44px;font-size:18.50px;line-height:18.50px;color:#5f636b">Mar 22</span>
<span class="t" style="left:1583.50px;top:935.64px;font-size:17.91px;line-height:17.91px;color:#5f636b;letter-spacing:-0.102px">All Users</span>
<span class="t" style="left:730.20px;top:1043.33px;font-size:22.53px;line-height:22.53px;color:#1d2026;-webkit-text-stroke:0.74px #1d2026;letter-spacing:-0.044px">Breakdown by:</span>
<span class="t" style="left:902.27px;top:1044.17px;font-size:21.53px;line-height:21.53px;color:#1d2026;letter-spacing:-0.096px">Top 1 (Default)</span>
<span class="t" style="left:1857.81px;top:1045.25px;font-size:21.09px;line-height:21.09px;color:#1d2026;letter-spacing:-0.618px">Export CSV</span>
<span class="t" style="left:2040.89px;top:1045.47px;font-size:20.47px;line-height:20.47px;color:#8b9099;font-style:italic;letter-spacing:0.115px">Search</span>
<span class="t" style="left:798.17px;top:1111.28px;font-size:18.33px;line-height:18.33px;color:#1d2026;-webkit-text-stroke:0.60px #1d2026;letter-spacing:-0.121px">Segm...</span>
<span class="t" style="left:921.67px;top:1111.45px;font-size:18.13px;line-height:18.13px;color:#4f535c;-webkit-text-stroke:0.60px #4f535c;clip-path:inset(-10px -10px -10px -0.67px)">e, Mar 14</span>
<span class="t" style="left:902.06px;top:1170.46px;font-size:19.30px;line-height:19.30px;color:#5a5f69;clip-path:inset(-10px -10px -10px 18.94px)">95,039</span>
<span class="t" style="left:1062.00px;top:1111.45px;font-size:18.13px;line-height:18.13px;color:#4f535c;-webkit-text-stroke:0.60px #4f535c">Wed, Mar 15</span>
<span class="t" style="left:1061.23px;top:1170.46px;font-size:19.30px;line-height:19.30px;color:#5a5f69">94,433</span>
<span class="t" style="left:1228.64px;top:1111.45px;font-size:18.13px;line-height:18.13px;color:#4f535c;-webkit-text-stroke:0.60px #4f535c">Thu, Mar 16</span>
<span class="t" style="left:1228.23px;top:1170.46px;font-size:19.30px;line-height:19.30px;color:#5a5f69">95,664</span>
<span class="t" style="left:1388.55px;top:1111.45px;font-size:18.13px;line-height:18.13px;color:#4f535c;-webkit-text-stroke:0.60px #4f535c">Fri, Mar 17</span>
<span class="t" style="left:1389.23px;top:1170.46px;font-size:19.30px;line-height:19.30px;color:#5a5f69">95,078</span>
<span class="t" style="left:1540.27px;top:1111.45px;font-size:18.13px;line-height:18.13px;color:#4f535c;-webkit-text-stroke:0.60px #4f535c">Sat, Mar 18</span>
<span class="t" style="left:1540.61px;top:1170.46px;font-size:19.30px;line-height:19.30px;color:#5a5f69">41,498</span>
<span class="t" style="left:1697.27px;top:1111.45px;font-size:18.13px;line-height:18.13px;color:#4f535c;-webkit-text-stroke:0.60px #4f535c">Sun, Mar 19</span>
<span class="t" style="left:1697.61px;top:1170.46px;font-size:19.30px;line-height:19.30px;color:#5a5f69">40,755</span>
<span class="t" style="left:1858.55px;top:1111.45px;font-size:18.13px;line-height:18.13px;color:#4f535c;-webkit-text-stroke:0.60px #4f535c">Mon, Mar 20</span>
<span class="t" style="left:1859.23px;top:1170.46px;font-size:19.30px;line-height:19.30px;color:#5a5f69">97,395</span>
<span class="t" style="left:2025.64px;top:1111.45px;font-size:18.13px;line-height:18.13px;color:#4f535c;-webkit-text-stroke:0.60px #4f535c">Tue, Mar 21</span>
<span class="t" style="left:2025.23px;top:1170.46px;font-size:19.30px;line-height:19.30px;color:#5a5f69">98,284</span>
<span class="t" style="left:2185.60px;top:1111.45px;font-size:18.13px;line-height:18.13px;color:#4f535c;-webkit-text-stroke:0.60px #4f535c">Wed, Mar 22</span>
<span class="t" style="left:2184.83px;top:1170.46px;font-size:19.30px;line-height:19.30px;color:#5a5f69">95,902</span>
<span class="t" style="left:799.20px;top:1171.23px;font-size:18.39px;line-height:18.39px;color:#1d2026;letter-spacing:-0.366px">All Users</span>
<span class="t" style="left:2364.84px;top:1112.23px;font-size:20.76px;line-height:20.76px;color:#1d2026;letter-spacing:-0.151px">Row Average</span>
<span class="t" style="left:2352.24px;top:1170.70px;font-size:19.02px;line-height:19.02px;color:#1d2026;-webkit-text-stroke:0.63px #1d2026;letter-spacing:0.254px">81,745.52</span>
</body></html>
